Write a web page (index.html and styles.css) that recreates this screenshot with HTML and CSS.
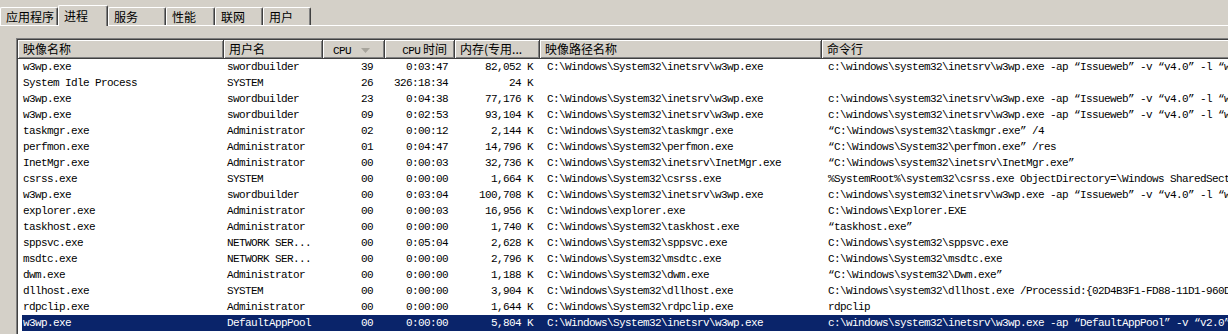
FILE: index.html
```html
<!DOCTYPE html>
<html lang="zh-CN">
  <head>
    <meta charset="UTF-8" />
    <title>Windows 任务管理器 - 进程</title>
    <link rel="stylesheet" href="styles.css">
  </head>
  <body>
    <div class="tabs">
      <div class="tab" style="width:58px">应用程序</div>
      <div class="tab active" style="width:50px">进程</div>
      <div class="tab" style="width:58px">服务</div>
      <div class="tab" style="width:49px">性能</div>
      <div class="tab" style="width:48px">联网</div>
      <div class="tab" style="width:48px">用户</div>
    </div>
    <div class="panel">
      <div class="list">
        <div class="head">
          <div class="hcell">映像名称</div>
          <div class="hcell">用户名</div>
          <div class="hcell cpu"><span class="lat">CPU</span>
            <svg class="sort" width="9" height="5" viewBox="0 0 9 5"><path d="M0 0h9L4.5 5z" fill="#a7a49c"/></svg>
          </div>
          <div class="hcell right"><span class="lat">CPU</span> 时间</div>
          <div class="hcell">内存(专用...</div>
          <div class="hcell">映像路径名称</div>
          <div class="hcell">命令行</div>
        </div>
        <div class="rows">
          <div class="row"><span>w3wp.exe</span><span>swordbuilder</span><span class="num">39</span><span class="num">0:03:47</span><span class="num">82,052 K</span><span class="path">C:\Windows\System32\inetsrv\w3wp.exe</span><span class="cmd">c:\windows\system32\inetsrv\w3wp.exe -ap “Issueweb” -v “v4.0” -l “w</span></div>
          <div class="row"><span>System Idle Process</span><span>SYSTEM</span><span class="num">26</span><span class="num">326:18:34</span><span class="num">24 K</span><span class="path"></span><span class="cmd"></span></div>
          <div class="row"><span>w3wp.exe</span><span>swordbuilder</span><span class="num">23</span><span class="num">0:04:38</span><span class="num">77,176 K</span><span class="path">C:\Windows\System32\inetsrv\w3wp.exe</span><span class="cmd">c:\windows\system32\inetsrv\w3wp.exe -ap “Issueweb” -v “v4.0” -l “w</span></div>
          <div class="row"><span>w3wp.exe</span><span>swordbuilder</span><span class="num">09</span><span class="num">0:02:53</span><span class="num">93,104 K</span><span class="path">C:\Windows\System32\inetsrv\w3wp.exe</span><span class="cmd">c:\windows\system32\inetsrv\w3wp.exe -ap “Issueweb” -v “v4.0” -l “w</span></div>
          <div class="row"><span>taskmgr.exe</span><span>Administrator</span><span class="num">02</span><span class="num">0:00:12</span><span class="num">2,144 K</span><span class="path">C:\Windows\System32\taskmgr.exe</span><span class="cmd">“C:\Windows\system32\taskmgr.exe” /4</span></div>
          <div class="row"><span>perfmon.exe</span><span>Administrator</span><span class="num">01</span><span class="num">0:04:47</span><span class="num">14,796 K</span><span class="path">C:\Windows\System32\perfmon.exe</span><span class="cmd">“C:\Windows\System32\perfmon.exe” /res</span></div>
          <div class="row"><span>InetMgr.exe</span><span>Administrator</span><span class="num">00</span><span class="num">0:00:03</span><span class="num">32,736 K</span><span class="path">C:\Windows\System32\inetsrv\InetMgr.exe</span><span class="cmd">“C:\Windows\system32\inetsrv\InetMgr.exe”</span></div>
          <div class="row"><span>csrss.exe</span><span>SYSTEM</span><span class="num">00</span><span class="num">0:00:00</span><span class="num">1,664 K</span><span class="path">C:\Windows\System32\csrss.exe</span><span class="cmd">%SystemRoot%\system32\csrss.exe ObjectDirectory=\Windows SharedSect</span></div>
          <div class="row"><span>w3wp.exe</span><span>swordbuilder</span><span class="num">00</span><span class="num">0:03:04</span><span class="num">100,708 K</span><span class="path">C:\Windows\System32\inetsrv\w3wp.exe</span><span class="cmd">c:\windows\system32\inetsrv\w3wp.exe -ap “Issueweb” -v “v4.0” -l “w</span></div>
          <div class="row"><span>explorer.exe</span><span>Administrator</span><span class="num">00</span><span class="num">0:00:03</span><span class="num">16,956 K</span><span class="path">C:\Windows\explorer.exe</span><span class="cmd">C:\Windows\Explorer.EXE</span></div>
          <div class="row"><span>taskhost.exe</span><span>Administrator</span><span class="num">00</span><span class="num">0:00:00</span><span class="num">1,740 K</span><span class="path">C:\Windows\System32\taskhost.exe</span><span class="cmd">“taskhost.exe”</span></div>
          <div class="row"><span>sppsvc.exe</span><span>NETWORK SER...</span><span class="num">00</span><span class="num">0:05:04</span><span class="num">2,628 K</span><span class="path">C:\Windows\System32\sppsvc.exe</span><span class="cmd">C:\Windows\system32\sppsvc.exe</span></div>
          <div class="row"><span>msdtc.exe</span><span>NETWORK SER...</span><span class="num">00</span><span class="num">0:00:00</span><span class="num">2,796 K</span><span class="path">C:\Windows\System32\msdtc.exe</span><span class="cmd">C:\Windows\System32\msdtc.exe</span></div>
          <div class="row"><span>dwm.exe</span><span>Administrator</span><span class="num">00</span><span class="num">0:00:00</span><span class="num">1,188 K</span><span class="path">C:\Windows\System32\dwm.exe</span><span class="cmd">“C:\Windows\system32\Dwm.exe”</span></div>
          <div class="row"><span>dllhost.exe</span><span>SYSTEM</span><span class="num">00</span><span class="num">0:00:00</span><span class="num">3,904 K</span><span class="path">C:\Windows\System32\dllhost.exe</span><span class="cmd">C:\Windows\system32\dllhost.exe /Processid:{02D4B3F1-FD88-11D1-960D</span></div>
          <div class="row"><span>rdpclip.exe</span><span>Administrator</span><span class="num">00</span><span class="num">0:00:00</span><span class="num">1,644 K</span><span class="path">C:\Windows\System32\rdpclip.exe</span><span class="cmd">rdpclip</span></div>
          <div class="row selected"><span>w3wp.exe</span><span>DefaultAppPool</span><span class="num">00</span><span class="num">0:00:00</span><span class="num">5,804 K</span><span class="path">C:\Windows\System32\inetsrv\w3wp.exe</span><span class="cmd">c:\windows\system32\inetsrv\w3wp.exe -ap “DefaultAppPool” -v “v2.0”</span></div>
        </div>
      </div>
    </div>
  </body>
</html>
```

FILE: styles.css
```css
body {
  margin: 0;
  width: 1228px;
  height: 334px;
  overflow: hidden;
  background-color: #d4d0c8;
  font-family: "Noto Sans CJK SC", sans-serif;
  color: #000;
}

/* tab strip */
.tabs {
  display: flex;
  align-items: flex-end;
  height: 25px;
}
.tab {
  box-sizing: border-box;
  height: 18px;
  padding-left: 5px;
  font-size: 12px;
  line-height: 17px;
  background: #d4d0c8;
  border-top: 1px solid #fff;
  border-left: 1px solid #fff;
  border-right: 1px solid #404040;
  box-shadow: inset -1px 0 #808080;
  border-radius: 2px 2px 0 0;
}
.tab.active {
  height: 21px;
  margin-bottom: -1px;
  padding-top: 1px;
  position: relative;
  z-index: 1;
}
.panel {
  border-top: 1px solid #fff;
  padding: 12px 0 0 16px;
}

/* process list */
.list {
  width: 1212px;
  height: 300px;
  overflow: hidden;
  background: #fff;
  border-top: 1px solid #808080;
  border-left: 1px solid #808080;
  box-shadow: inset 1px 1px #404040;
  padding: 1px 0 0 1px;
}
.head {
  display: grid;
  grid-template-columns: 206px 99px 62px 70px 85px 282px 1fr;
  height: 19px;
  background: #d4d0c8;
}
.hcell {
  box-sizing: border-box;
  height: 19px;
  padding-left: 5px;
  font-size: 12px;
  line-height: 17px;
  white-space: nowrap;
  overflow: hidden;
  border-right: 1px solid #404040;
  border-bottom: 1px solid #404040;
  box-shadow: inset 1px 1px #fff, inset -1px -1px #808080;
}
.hcell:last-child {
  border-right: none;
}
.hcell.right {
  text-align: right;
  padding-right: 7px;
}
.hcell.cpu {
  padding-left: 10px;
}
.lat {
  font-family: "Liberation Mono", monospace;
  font-size: 11px;
  letter-spacing: -0.6px;
}
.sort {
  margin-left: 7px;
  vertical-align: 1px;
}

.row {
  display: grid;
  grid-template-columns: 202px 99px 62px 70px 85px 282px 1fr;
  margin-left: 4px;
  height: 16px;
  font-family: "Liberation Mono", "Noto Sans CJK SC", monospace;
  font-size: 11px;
  letter-spacing: -0.6px;
  line-height: 16px;
  white-space: nowrap;
}
.row span {
  overflow: hidden;
  padding-left: 1px;
}
.row span:nth-child(2) {
  padding-left: 3px;
}
.row .num {
  text-align: right;
  padding-right: 7px;
}
.row .num:nth-child(3) {
  padding-right: 12px;
}
.row .path {
  padding-left: 7px;
}
.row .cmd {
  padding-left: 6px;
}
.row.selected {
  background-color: #0a246a;
  color: #fff;
}
```
